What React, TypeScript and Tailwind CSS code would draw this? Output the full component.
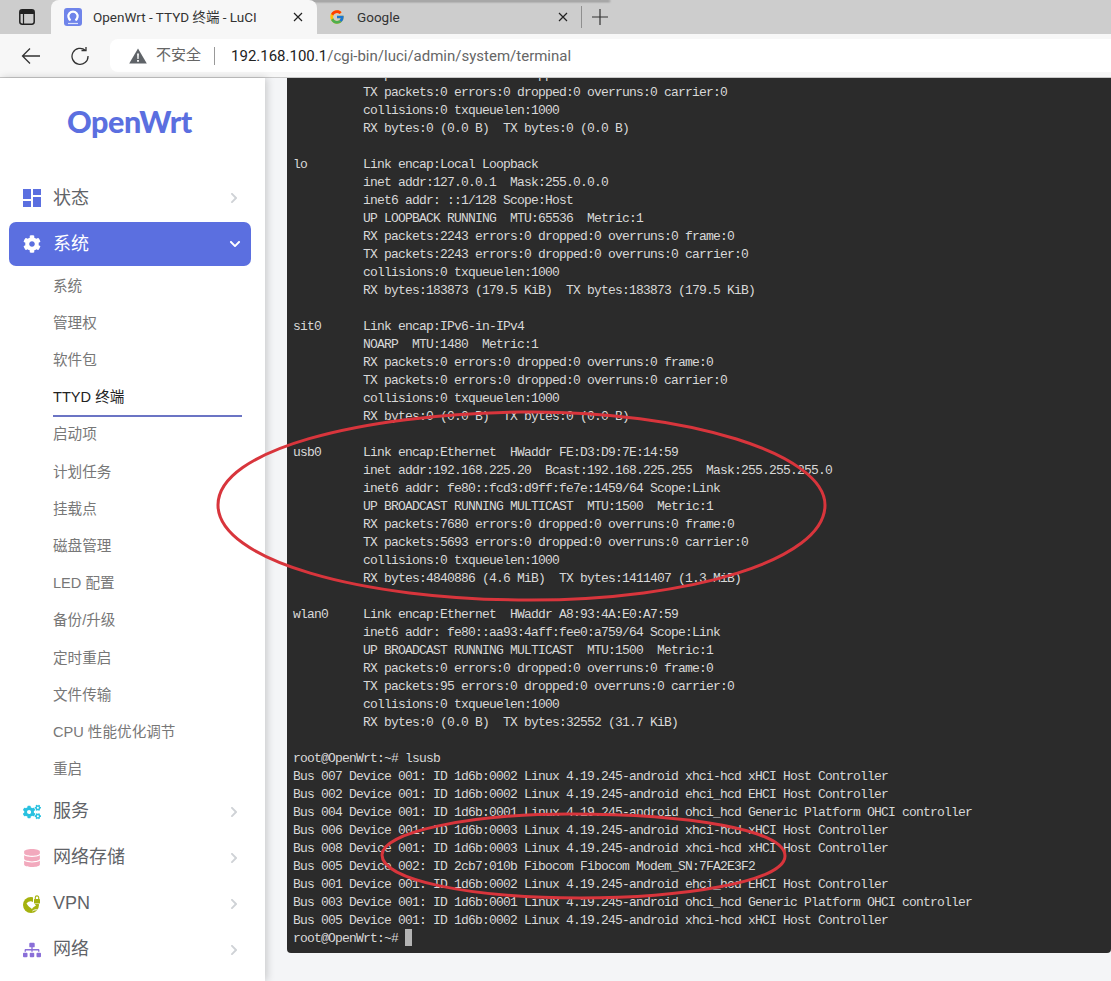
import React from 'react';
import { FaChevronRight, FaChevronDown, FaCog, FaCogs, FaDatabase, FaSitemap } from 'react-icons/fa';
import { MdDashboard } from 'react-icons/md';
import { FcGoogle } from 'react-icons/fc';

const subItems = ['系统', '管理权', '软件包', 'TTYD 终端', '启动项', '计划任务', '挂载点', '磁盘管理', 'LED 配置', '备份/升级', '定时重启', '文件传输', 'CPU 性能优化调节', '重启'];

const terminalText = `          RX packets:0 errors:0 dropped:0 overruns:0 frame:0
          TX packets:0 errors:0 dropped:0 overruns:0 carrier:0
          collisions:0 txqueuelen:1000
          RX bytes:0 (0.0 B)  TX bytes:0 (0.0 B)

lo        Link encap:Local Loopback
          inet addr:127.0.0.1  Mask:255.0.0.0
          inet6 addr: ::1/128 Scope:Host
          UP LOOPBACK RUNNING  MTU:65536  Metric:1
          RX packets:2243 errors:0 dropped:0 overruns:0 frame:0
          TX packets:2243 errors:0 dropped:0 overruns:0 carrier:0
          collisions:0 txqueuelen:1000
          RX bytes:183873 (179.5 KiB)  TX bytes:183873 (179.5 KiB)

sit0      Link encap:IPv6-in-IPv4
          NOARP  MTU:1480  Metric:1
          RX packets:0 errors:0 dropped:0 overruns:0 frame:0
          TX packets:0 errors:0 dropped:0 overruns:0 carrier:0
          collisions:0 txqueuelen:1000
          RX bytes:0 (0.0 B)  TX bytes:0 (0.0 B)

usb0      Link encap:Ethernet  HWaddr FE:D3:D9:7E:14:59
          inet addr:192.168.225.20  Bcast:192.168.225.255  Mask:255.255.255.0
          inet6 addr: fe80::fcd3:d9ff:fe7e:1459/64 Scope:Link
          UP BROADCAST RUNNING MULTICAST  MTU:1500  Metric:1
          RX packets:7680 errors:0 dropped:0 overruns:0 frame:0
          TX packets:5693 errors:0 dropped:0 overruns:0 carrier:0
          collisions:0 txqueuelen:1000
          RX bytes:4840886 (4.6 MiB)  TX bytes:1411407 (1.3 MiB)

wlan0     Link encap:Ethernet  HWaddr A8:93:4A:E0:A7:59
          inet6 addr: fe80::aa93:4aff:fee0:a759/64 Scope:Link
          UP BROADCAST RUNNING MULTICAST  MTU:1500  Metric:1
          RX packets:0 errors:0 dropped:0 overruns:0 frame:0
          TX packets:95 errors:0 dropped:0 overruns:0 carrier:0
          collisions:0 txqueuelen:1000
          RX bytes:0 (0.0 B)  TX bytes:32552 (31.7 KiB)

root@OpenWrt:~# lsusb
Bus 007 Device 001: ID 1d6b:0002 Linux 4.19.245-android xhci-hcd xHCI Host Controller
Bus 002 Device 001: ID 1d6b:0002 Linux 4.19.245-android ehci_hcd EHCI Host Controller
Bus 004 Device 001: ID 1d6b:0001 Linux 4.19.245-android ohci_hcd Generic Platform OHCI controller
Bus 006 Device 001: ID 1d6b:0003 Linux 4.19.245-android xhci-hcd xHCI Host Controller
Bus 008 Device 001: ID 1d6b:0003 Linux 4.19.245-android xhci-hcd xHCI Host Controller
Bus 005 Device 002: ID 2cb7:010b Fibocom Fibocom Modem_SN:7FA2E3F2
Bus 001 Device 001: ID 1d6b:0002 Linux 4.19.245-android ehci_hcd EHCI Host Controller
Bus 003 Device 001: ID 1d6b:0001 Linux 4.19.245-android ohci_hcd Generic Platform OHCI controller
Bus 005 Device 001: ID 1d6b:0002 Linux 4.19.245-android xhci-hcd xHCI Host Controller
root@OpenWrt:~# `;

const VpnIcon = () => (
  <svg width="18" height="18" viewBox="0 0 18 18">
    <circle cx="8" cy="10" r="8" fill="#a5b20e" />
    <path d="M3.5 8.5c2-2 4-3 6.5-1.5l3 3.5c-1.5 1-3 1.5-4 3.5C7 12 5 11.5 3.5 8.5z" fill="#fff" />
    <path d="M9.5 16c1.5-1 3-1.5 5-1" fill="none" stroke="#fff" strokeWidth="1" />
    <path d="M10 0h8v9h-8z" fill="#fff" />
    <path d="M12.3 4V2.6a1.7 1.7 0 0 1 3.4 0V4" fill="none" stroke="#a5b20e" strokeWidth="1.1" />
    <rect x="11" y="4" width="6" height="4.5" rx="0.6" fill="#a5b20e" />
  </svg>
);

const MainItem = ({ icon, label }: { icon: React.ReactNode; label: string }) => (
  <div className="ml-[9px] mr-[14px] flex h-[44px] items-center pl-[14px] pr-[11px] text-[18px] text-[#5f6368]">
    <span className="flex w-[30px] items-center">{icon}</span>
    <span className="flex-1">{label}</span>
    <FaChevronRight className="text-[#cfd2d6]" size={12} />
  </div>
);

const Sidebar = () => (
  <aside className="z-10 flex w-[265px] shrink-0 flex-col bg-white shadow-[2px_0_8px_rgba(0,0,0,0.18)]">
    <div className="flex h-[98px] items-center justify-center pb-[10px] pr-[6px] text-[30.5px] font-black tracking-[-0.4px] text-[#5b6fe0] [font-family:'Lato',sans-serif]">
      OpenWrt
    </div>
    <MainItem icon={<MdDashboard className="-ml-[3px] text-[#5b6fe0]" size={24} />} label="状态" />
    <div className="ml-[9px] mr-[14px] mt-[2px] flex h-[44px] items-center rounded-[7px] bg-[#5b6fe0] pl-[14px] pr-[10px] text-[18px] text-white">
      <FaCog className="mr-[12px]" size={18} />
      <span className="flex-1">系统</span>
      <FaChevronDown size={12} />
    </div>
    <div className="flex flex-col pb-[1px] pt-[2px]">
      {subItems.map((item) =>
        item === 'TTYD 终端' ? (
          <div key={item} className="ml-[53px] mr-[23px] flex h-[37.2px] items-center border-b-2 border-[#6b74c4] pt-[2px] text-[14.6px] text-[#222]">
            {item}
          </div>
        ) : (
          <div key={item} className="ml-[53px] flex h-[37.2px] items-center text-[14.6px] text-[#777]">
            {item}
          </div>
        )
      )}
    </div>
    <div className="flex flex-col gap-[2px]">
      <MainItem icon={<FaCogs className="text-[#29c1e0]" size={18} />} label="服务" />
      <MainItem icon={<FaDatabase className="text-[#f2a9bd]" size={18} />} label="网络存储" />
      <MainItem icon={<VpnIcon />} label="VPN" />
      <MainItem icon={<FaSitemap className="text-[#8a6fd8]" size={18} />} label="网络" />
    </div>
  </aside>
);

const Terminal = () => (
  <div className="flex min-w-0 flex-1 bg-[#f4f5f7] pb-[28px] pl-[22px]">
    <div className="flex min-w-0 flex-1 flex-col justify-end overflow-hidden rounded-b-[4px] bg-[#2b2b2b] pb-[5px] pl-[6px]">
      <pre className="whitespace-pre text-[13px] leading-[18px] tracking-[-0.8px] text-[#d8d8d8] [font-family:'Liberation_Mono',monospace]">
        {terminalText}
        <span className="relative -top-[1px] inline-block h-[17px] w-[7px] bg-[#b4b4b4] align-middle" />
      </pre>
    </div>
  </div>
);

const TabStrip = () => (
  <div className="relative flex h-[34px] items-end bg-[#cdcdcd] text-[13.5px] text-[#333]">
    {/* shadow of a window lying above this one */}
    <div className="absolute left-[258px] top-0 h-[2px] w-[352px] bg-[#8c8c8c] blur-[1px]" />
    <div className="flex h-[34px] w-[51px] items-center pb-[1px] pl-[19px]">
      <svg width="16" height="16" viewBox="0 0 16 16" fill="none">
        <rect x="0.8" y="0.8" width="14.4" height="14.4" rx="2.4" stroke="#222" strokeWidth="1.5" />
        <path d="M1 3a2 2 0 0 1 2-2h10a2 2 0 0 1 2 2v2H1z" fill="#222" />
        <path d="M4.5 4v11" stroke="#222" strokeWidth="1.2" />
      </svg>
    </div>
    <div className="z-10 flex h-[34px] w-[266px] items-center rounded-t-[8px] bg-[#f7f7f7] pl-[13px] pr-[14px]">
      <svg width="18" height="18" viewBox="0 0 18 18" className="mr-[11px] shrink-0">
        <rect width="18" height="18" rx="3" fill="#6f84ea" />
        <path d="M6.6 12.2a4.6 4.6 0 1 1 4.8 0" fill="none" stroke="#fff" strokeWidth="2.2" />
        <path d="M4 15.5h10" stroke="#dfe4fb" strokeWidth="1.2" />
      </svg>
      <span className="flex-1 truncate [font-family:'Roboto','Noto_Sans_CJK_SC',sans-serif]">OpenWrt - TTYD 终端 - LuCI</span>
      <svg width="10" height="10" viewBox="0 0 10 10" className="ml-[6px] shrink-0">
        <path d="M1 1l8 8M9 1l-8 8" stroke="#222" strokeWidth="1.2" />
      </svg>
    </div>
    <div className="flex h-[34px] w-[264px] items-center pl-[12px] pr-[13px]">
      <FcGoogle size={16} className="mr-[12px] shrink-0" />
      <span className="flex-1 [font-family:'Roboto',sans-serif]">Google</span>
      <svg width="10" height="10" viewBox="0 0 10 10" className="shrink-0">
        <path d="M1 1l8 8M9 1l-8 8" stroke="#222" strokeWidth="1.2" />
      </svg>
    </div>
    <div className="mb-[6px] h-[22px] w-px bg-[#8f8f8f]" />
    <svg width="16" height="16" viewBox="0 0 16 16" className="mb-[9px] ml-[10px]">
      <path d="M8 0v16M0 8h16" stroke="#333" strokeWidth="1.2" />
    </svg>
  </div>
);

const AddressBar = () => (
  <div className="flex h-[44px] items-center border-b border-[#c8c8c8] bg-[#f7f7f7]">
    <div className="flex w-[110px] shrink-0 items-center pl-[21px]">
      <svg width="20" height="18" viewBox="0 0 20 18" fill="none" stroke="#333" strokeWidth="1.3">
        <path d="M19 9H2M9 1.5L1.5 9 9 16.5" />
      </svg>
      <svg width="18" height="18" viewBox="0 0 18 18" fill="none" stroke="#333" strokeWidth="1.3" className="ml-[30px]">
        <path d="M14.5 3.5A8 8 0 1 0 17 9" />
        <path d="M10.5 3.5h4.5V0" />
      </svg>
    </div>
    <div className="flex h-[33px] flex-1 items-center rounded-l-[8px] bg-white pl-[19px] [font-family:'Roboto','Noto_Sans_CJK_SC',sans-serif]">
      <svg width="18" height="16" viewBox="0 0 18 16" className="mr-[9px]">
        <path d="M9 0.5L17.8 15.5H0.2z" fill="#5f6368" />
        <path d="M8.1 5.5h1.8l-.3 5.5H8.4zM8.1 12h1.8v1.8H8.1z" fill="#fff" />
      </svg>
      <span className="text-[15px] text-[#666]">不安全</span>
      <span className="ml-[13px] mr-[16px] h-[18px] w-px bg-[#999]" />
      <span className="pt-[1px] text-[15px] text-[#222]">192.168.100.1</span>
      <span className="pt-[1px] text-[15px] text-[#666]">/cgi-bin/luci/admin/system/terminal</span>
    </div>
  </div>
);

const App: React.FC = () => {
  return (
    <div className="relative flex h-[981px] w-[1111px] flex-col overflow-hidden bg-white [font-family:'Liberation_Sans','Noto_Sans_CJK_SC',sans-serif]">
      <TabStrip />
      <AddressBar />
      <div className="flex min-h-0 flex-1">
        <Sidebar />
        <Terminal />
      </div>
      {/* hand drawn marks on top of the screenshot */}
      <svg className="pointer-events-none absolute left-0 top-0 z-20" width="1111" height="981" fill="none" stroke="#d8353c" strokeWidth="3">
        <path d="M521 412C690 410 825 455 825 505C825 560 690 600 530 600C360 600 218 560 218 505C218 450 360 414 521 412Z" />
        <path d="M570 814C690 814 785 830 785 856C785 882 680 898 580 898C470 898 382 880 382 855C382 832 470 814 570 814Z" />
      </svg>
    </div>
  );
};

export default App;
